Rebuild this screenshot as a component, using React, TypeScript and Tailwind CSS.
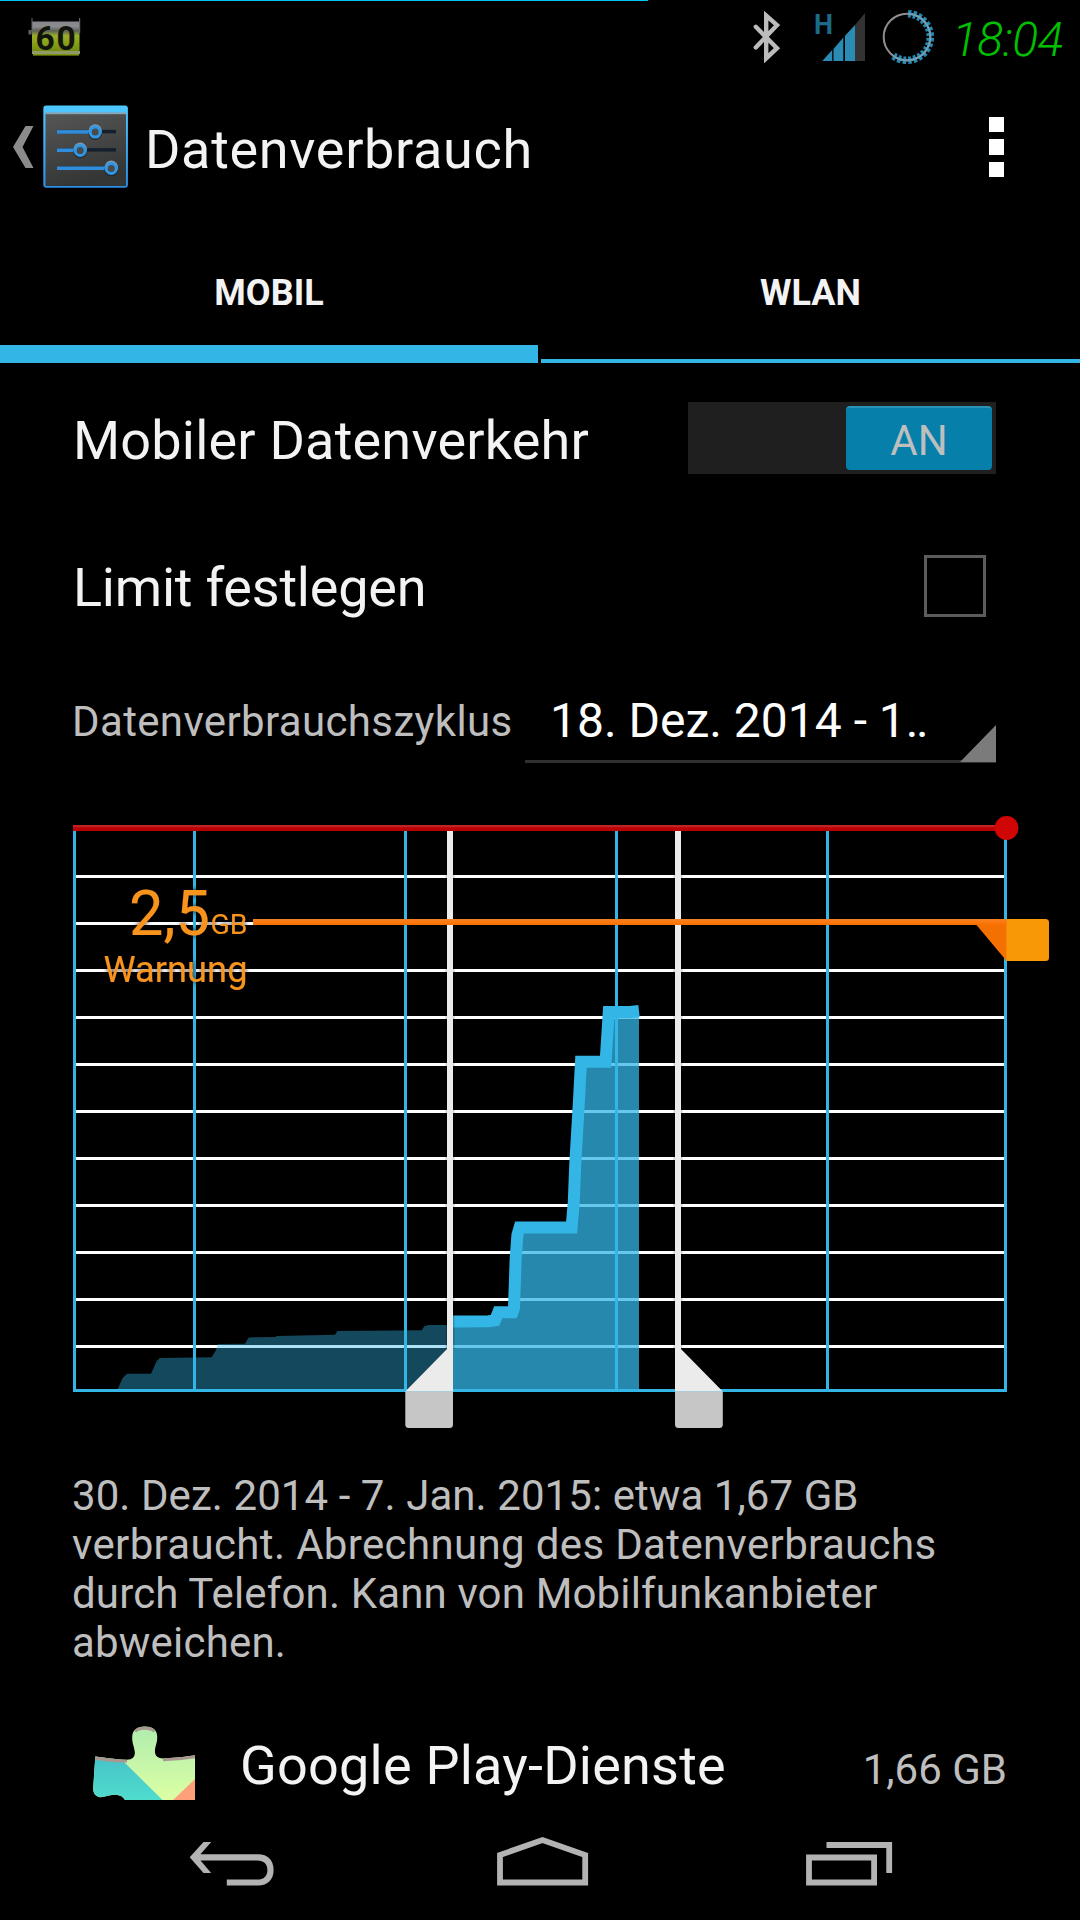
import React from "react";

const BLUE = "#33b5e5";

function BatterySaverIcon() {
  return (
    <svg width="60" height="60" viewBox="26 8 60 60">
      <defs>
        <linearGradient id="lcd" x1="0" y1="0" x2="0" y2="1">
          <stop offset="0" stopColor="#85878a" />
          <stop offset="0.16" stopColor="#8a8c8e" />
          <stop offset="0.3" stopColor="#5d6058" />
          <stop offset="0.46" stopColor="#98ad2a" />
          <stop offset="0.75" stopColor="#849d16" />
          <stop offset="1" stopColor="#6f8512" />
        </linearGradient>
      </defs>
      <rect x="32" y="21.5" width="47.5" height="31" fill="url(#lcd)" />
      <rect x="28.5" y="30" width="3" height="4.5" fill="#5b6168" />
      <rect x="31.5" y="18" width="1" height="15" fill="#66696d" />
      <rect x="79" y="18" width="1.2" height="15" fill="#66696d" />
      <rect x="32" y="51" width="48" height="3" fill="#8f9a66" />
      <rect x="33" y="54" width="46" height="1.6" fill="#7d9410" />
      <text x="35.4 56.6" y="50" fontFamily="Roboto" fontWeight="700" fontSize="33.5" fill="#11140c">60</text>
    </svg>
  );
}

function BluetoothIcon() {
  return (
    <svg width="30" height="52" viewBox="751 11 30 52" fill="none" stroke="#bcbcbc" strokeWidth="4.4" strokeLinecap="round">
      <path d="M755.8 26.8 L777 48.2 L766.2 58.4 V15.6 L777 25.2 L755.8 47.4" />
    </svg>
  );
}

function SignalIcon() {
  return (
    <svg width="60" height="60" viewBox="808 4 60 60">
      <text x="814" y="34.4" fontFamily="Roboto" fontWeight="700" fontSize="28" textLength="19" lengthAdjust="spacingAndGlyphs" fill="#1b6a88">H</text>
      <path d="M822.3 61 L832.2 50 V61z" fill="#2a8cb4" />
      <path d="M833.5 61 V49 L843.3 37.5 V61z" fill="#2a8cb4" />
      <path d="M845 61 V35.8 L855 25 V61z" fill="#2a8cb4" />
      <path d="M855 61 V25 L865 13 V61z" fill="#333" />
    </svg>
  );
}

function RingIcon() {
  return (
    <svg width="54" height="56" viewBox="880 9 54 56" fill="none">
      <circle cx="907" cy="37" r="23.3" stroke="#8e8e8e" strokeWidth="2" />
      <path d="M908 13.7 A23.3 23.3 0 1 1 893.4 55.9" stroke="#2589b3" strokeWidth="7.6" strokeDasharray="3.2 2" />
      <path d="M908 13.7 A23.3 23.3 0 1 1 893.4 55.9" stroke="#6f9fb2" strokeWidth="2" />
    </svg>
  );
}

const sliders = [
  { y: 131.7, x: 95.2 },
  { y: 150, x: 80.2 },
  { y: 168, x: 111.3 },
];

function SettingsIcon() {
  return (
    <svg width="86" height="84" viewBox="43 105 86 84">
      <defs>
        <linearGradient id="frame" x1="0" y1="0" x2="0" y2="1">
          <stop offset="0" stopColor="#4fc8ff" />
          <stop offset="1" stopColor="#2a8de6" />
        </linearGradient>
        <linearGradient id="panel" x1="0" y1="0" x2="0.3" y2="1">
          <stop offset="0" stopColor="#565656" />
          <stop offset="1" stopColor="#343635" />
        </linearGradient>
      </defs>
      <rect x="43.3" y="105.5" width="84.6" height="82.3" rx="3" fill="url(#frame)" />
      <rect x="45.5" y="113" width="80.5" height="73" fill="url(#panel)" />
      <rect x="45.5" y="112.4" width="80.5" height="1.8" fill="#8ba3b2" />
      {sliders.map(({ x, y }) => (
        <g key={y}>
          <rect x="57" y={y - 1.8} width="59" height="3.4" fill="#14202c" />
          <rect x="57" y={y - 1.6} width={x - 57} height="3.6" fill="#2f8ddb" />
          <circle cx={x} cy={y + 1.4} r="6.8" fill="#1b2024" opacity="0.7" />
          <circle cx={x} cy={y - 0.8} r="6.6" fill="#7f98b2" />
          <circle cx={x} cy={y + 0.4} r="5" fill="#4a4a4a" stroke="#2f97e6" strokeWidth="3" />
        </g>
      ))}
    </svg>
  );
}

function StatusBar() {
  return (
    <div className="flex h-[75px] flex-col">
      <div className="h-px w-[648px] bg-[#00c3f5]" />
      <div className="flex h-[74px] items-start">
        <div className="ml-[26px] mt-[7px]"><BatterySaverIcon /></div>
        <div className="ml-auto mt-[10px]"><BluetoothIcon /></div>
        <div className="ml-[27px] mt-[3px]"><SignalIcon /></div>
        <div className="ml-[12px] mt-2"><RingIcon /></div>
        <div className="ml-[18px] mr-[17px] mt-[8px] w-[111px] whitespace-nowrap text-[48px] font-light italic leading-[62px] tracking-[-0.5px] text-[#00c000]">18:04</div>
      </div>
    </div>
  );
}

function ActionBar() {
  return (
    <div className="flex h-36 items-center">
      <svg className="ml-[13px]" width="21" height="42" viewBox="0 0 21 42">
        <path d="M12.5 0 H20.5 L9.5 21 L20.5 42 H12.5 L0 21z" fill="#8b8b8b" />
      </svg>
      <div className="ml-[9px]"><SettingsIcon /></div>
      <h1 className="ml-[16px] pt-1.5 text-[54px] leading-[64px] tracking-[0.68px] text-[#f3f3f3]">Datenverbrauch</h1>
      <div className="ml-auto mr-[76px] flex flex-col gap-[7px]">
        <div className="h-[15.5px] w-[15.5px] bg-white" />
        <div className="h-[15.5px] w-[15.5px] bg-white" />
        <div className="h-[15.5px] w-[15.5px] bg-white" />
      </div>
    </div>
  );
}

function Tabs() {
  return (
    <div className="flex h-36 gap-[3px] text-[36px] font-bold text-[#f3f3f3]">
      <div className="flex w-[538px] flex-col items-center border-b-[18px] border-[#33b5e5] pt-[52px] leading-[44px]">MOBIL</div>
      <div className="flex flex-1 flex-col items-center border-b-[4px] border-[#33b5e5] pt-[52px] leading-[44px]">WLAN</div>
    </div>
  );
}

const gridRows = [875, 922, 969, 1016, 1063, 1110, 1157, 1204, 1251, 1298, 1345];
const gridCols = [73, 193, 404, 615, 826, 1004];
const usage =
  "L457.2 1321.5 L489 1321.3 L495 1320.4 L498.3 1312.3 L512.5 1312.2 L514 1308 L515.6 1260 L517.4 1235 L519.6 1227.5 H571.6 L573.8 1202 L575.2 1165 L579 1100 L581 1061.8 H605.6 L608.8 1012 L630 1012 L639 1011";

function Chart() {
  return (
    <svg className="block" width="1080" height="660" viewBox="0 780 1080 660" fontFamily="Roboto">
      <defs>
        <linearGradient id="limit" x1="0" y1="825" x2="0" y2="831" gradientUnits="userSpaceOnUse">
          <stop offset="0.3" stopColor="#bf2326" />
          <stop offset="0.45" stopColor="#b90003" />
        </linearGradient>
        <linearGradient id="warn" x1="0" y1="919" x2="0" y2="925" gradientUnits="userSpaceOnUse">
          <stop offset="0" stopColor="#f28128" />
          <stop offset="0.5" stopColor="#ff790f" />
          <stop offset="1" stopColor="#f57000" />
        </linearGradient>
        <filter id="shade" x="-10%" y="-10%" width="120%" height="120%">
          <feDropShadow dx="0" dy="0" stdDeviation="2.5" floodColor="#000" floodOpacity="0.9" />
        </filter>
      </defs>
      {gridRows.map((y) => <rect key={y} x="76" y={y} width="928" height="3" fill="#fff" />)}
      <path
        d="M117.7 1389 L122.7 1378 L127 1373.7 H151 L156.7 1361 L160 1358 L211.7 1357.3 L215.7 1350.7 L218 1344 L245 1343.7 L248.7 1337.4 L275.3 1337 L277 1336 L335 1334.7 L337.3 1331 L421.7 1330.3 L424.3 1326.3 L428.3 1325 H450 V1389z"
        fill={BLUE}
        fillOpacity="0.4"
      />
      <path d={`M450 1325 ${usage} V1389 H450z`} fill={BLUE} fillOpacity="0.75" />
      <path d={`M450 1321.5 ${usage}`} fill="none" stroke={BLUE} strokeWidth="12" />
      {gridCols.map((x) => <rect key={x} x={x} y="828" width="3" height="564" fill={BLUE} />)}
      <rect x="73" y="1389" width="934" height="3" fill={BLUE} />

      <rect x="445.5" y="830" width="9" height="519" fill="#000" opacity="0.18" />
      <rect x="673.5" y="830" width="9" height="519" fill="#000" opacity="0.18" />
      <path d="M447 831 H453 V1391.5 H405.3 L447 1349z" fill="#ebebeb" />
      <path d="M405.3 1391.5 H453 V1424.5 q0 3.5 -3.5 3.5 H408.8 q-3.5 0 -3.5 -3.5z" fill="#c6c6c6" />
      <path d="M675 831 H681 V1349 L722.8 1391.5 H675z" fill="#ebebeb" />
      <path d="M675 1391.5 H722.8 V1424.5 q0 3.5 -3.5 3.5 H678.5 q-3.5 0 -3.5 -3.5z" fill="#c6c6c6" />

      <rect x="73" y="825" width="934" height="6" fill="url(#limit)" />
      <circle cx="1006.6" cy="828" r="11.9" fill="#d00506" />

      <path d="M974 922 H1007 V961.5z" fill="#f47000" />
      <path d="M1006.3 919 H1045.5 q3.5 0 3.5 3.5 V957.5 q0 3.5 -3.5 3.5 H1006.3z" fill="#f89806" />
      <rect x="253" y="919" width="753.5" height="6" fill="url(#warn)" />

      <g fill="#f8931f" filter="url(#shade)">
        <text x="129" y="934.5" fontSize="63" textLength="81" lengthAdjust="spacingAndGlyphs">2,5</text>
        <text x="210.5" y="934" fontSize="27" textLength="37" lengthAdjust="spacingAndGlyphs">GB</text>
        <text x="103.5" y="982" fontSize="36" textLength="144" lengthAdjust="spacingAndGlyphs">Warnung</text>
      </g>
    </svg>
  );
}

function PuzzleIcon() {
  return (
    <svg width="104" height="76" viewBox="92 1724 104 76">
      <defs>
        <clipPath id="piece">
          <path d="M95.3 1756.5 Q115 1759.5 127 1759.8 Q135.5 1759.5 134.8 1752 C134 1746 132 1743 132.2 1737 C132.4 1730 137 1726.5 144.5 1726.5 C153 1726.5 157.6 1730 157.2 1738 C157 1744 154.6 1747 155 1752.5 Q155.4 1758 163 1758.5 Q180 1758 195 1755.3 V1800 H125 C123 1796.5 120 1795 115.5 1794.8 C108 1794.8 104 1797.4 100 1797.2 C95 1796.5 93 1792.5 93.2 1788z" />
        </clipPath>
        <linearGradient id="teal" x1="0" y1="0" x2="0" y2="1">
          <stop offset="0" stopColor="#45bfc9" />
          <stop offset="1" stopColor="#50dccd" />
        </linearGradient>
        <linearGradient id="lime" x1="0" y1="0" x2="0" y2="1">
          <stop offset="0" stopColor="#aeecae" />
          <stop offset="1" stopColor="#dcffa4" />
        </linearGradient>
      </defs>
      <g clipPath="url(#piece)">
        <rect x="92" y="1724" width="104" height="76" fill="url(#lime)" />
        <path d="M92 1750 H112 L123 1761 L162.5 1800 H92z" fill="url(#teal)" />
        <path d="M195.5 1778.5 V1800 H173z" fill="#ffa07a" />
        <path d="M95.5 1757.5 Q115 1760.5 127 1760.3 M163 1759 Q180 1758.6 195 1756 M134.5 1731 Q137.5 1727.5 144.5 1727.5 Q152 1727.5 155 1731" fill="none" stroke="#a89890" strokeWidth="4.4" />
      </g>
    </svg>
  );
}

function NavBar() {
  return (
    <div className="flex h-[120px] items-start bg-black">
      <svg className="ml-[186px] mt-[34px]" width="92" height="56" viewBox="186 1834 92 56">
        <path d="M189.7 1857.2 L203.5 1842 H211.2 L200.5 1854.3 H258 C268 1854.3 273.6 1860.5 273.6 1870 C273.6 1879.5 268 1885.5 258 1885.5 H226.8 V1879.6 H257 C264 1879.6 267.4 1876 267.4 1870 C267.4 1864 264 1860.4 257 1860.4 H200.5 L211.2 1873 H203.5z" fill="#b3b3b3" />
      </svg>
      <svg className="ml-[216px] mt-[34px]" width="98" height="56" viewBox="494 1834 98 56" fill="none" stroke="#b3b3b3" strokeWidth="5.8">
        <path d="M500 1855 L542.5 1840 L585.2 1855 V1882.5 H500z" />
      </svg>
      <svg className="ml-[211px] mt-[34px]" width="94" height="56" viewBox="803 1834 94 56" fill="none" stroke="#b3b3b3" strokeWidth="5.8">
        <path d="M809 1857.5 H874.1 V1882.5 H809z" />
        <path d="M826.5 1845 H889.2 V1873" />
      </svg>
    </div>
  );
}

export default function App() {
  return (
    <div className="flex h-[1920px] w-[1080px] flex-col overflow-hidden bg-black font-['Roboto',sans-serif]">
      <StatusBar />
      <ActionBar />
      <Tabs />
      <main className="flex h-[1437px] flex-col overflow-hidden">
        <div className="flex h-[150px] shrink-0 items-center justify-between pl-[73px] pr-[84px]">
          <span className="pt-1.5 text-[54px] leading-[64px] tracking-[0.2px] text-[#f3f3f3]">Mobiler Datenverkehr</span>
          <div className="flex h-[72px] w-[308px] items-center justify-end bg-[#1f1f1f] pr-1">
            <div className="flex h-[64px] w-[146px] items-center justify-center rounded-[4px] border-t-2 border-[#2b93b8] bg-[#067fab] pt-1 text-[42px] leading-[50px] text-[#bebebe]">AN</div>
          </div>
        </div>
        <div className="flex h-[147px] shrink-0 items-center justify-between pl-[73px] pr-[94px]">
          <span className="pt-0.5 text-[54px] leading-[64px] tracking-[-0.22px] text-[#f3f3f3]">Limit festlegen</span>
          <div className="mb-0.5 h-[62px] w-[62px] border-[3px] border-[#5c5c5c]" />
        </div>
        <div className="flex h-[120px] shrink-0 items-start pl-[72px]">
          <span className="mt-[37px] w-[453px] whitespace-nowrap text-[42px] leading-[50px] tracking-[0.36px] text-[#bebebe]">Datenverbrauchszyklus</span>
          <div className="flex h-[103px] w-[471px] items-end justify-between border-b-[3px] border-[#303030] pl-[25px]">
            <span className="whitespace-nowrap pb-[9px] text-[48px] leading-[60px] text-white">18. Dez. 2014 - 1<span className="tracking-[-2.4px]">..</span></span>
            <svg width="36" height="37" viewBox="0 0 36 37" className="-mb-[2px]">
              <path d="M36 0 V37 H0z" fill="#7b7b7b" />
            </svg>
          </div>
        </div>
        <div className="shrink-0"><Chart /></div>
        <p className="mt-[31px] shrink-0 pl-[72px] text-[42px] leading-[49px] text-[#bebebe]">
          <span className="tracking-[0.07px]">30. Dez. 2014 - 7. Jan. 2015: etwa 1,67 GB</span><br />
          <span className="tracking-[0.35px]">verbraucht. Abrechnung des Datenverbrauchs</span><br />
          <span className="tracking-[0.15px]">durch Telefon. Kann von Mobilfunkanbieter</span><br />
          <span className="tracking-[0.2px]">abweichen.</span>
        </p>
        <div className="mt-auto flex h-[76px] shrink-0 items-start pl-[92px] pr-[73px]">
          <PuzzleIcon />
          <span className="ml-[44px] mt-[10px] text-[54px] leading-[64px] tracking-[0.22px] text-[#f3f3f3]">Google Play-Dienste</span>
          <span className="ml-auto mt-[21px] text-[42px] leading-[50px] text-[#bebebe]">1,66 GB</span>
        </div>
      </main>
      <NavBar />
    </div>
  );
}
